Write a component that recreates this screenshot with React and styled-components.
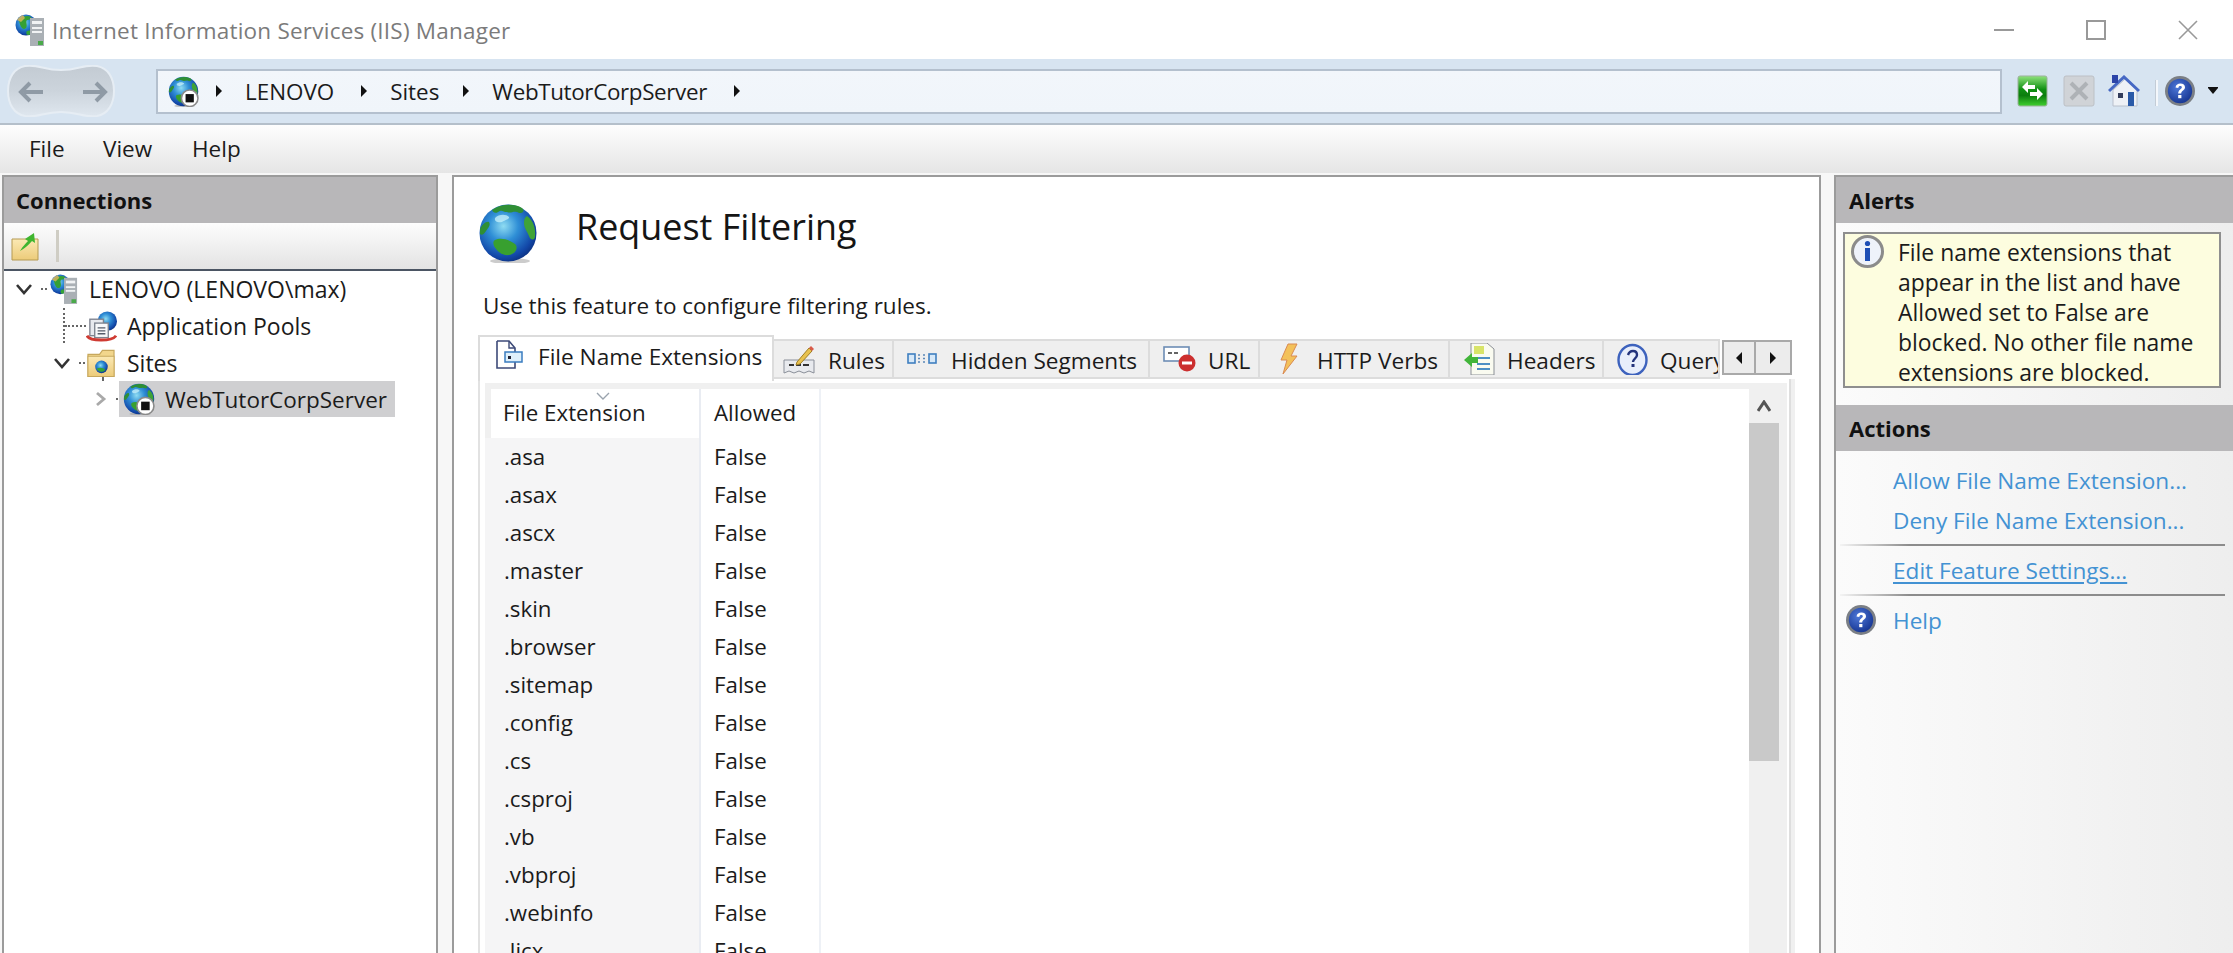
import React from "react";
import styled, { createGlobalStyle } from "styled-components";

const Global = createGlobalStyle`
  html, body { margin: 0; height: 100%; overflow: hidden; background: #f7f7f7; }
  body { font-family: "Open Sans", "Noto Sans", sans-serif; color: #1b1b1b; }
  * { box-sizing: border-box; }
`;

const Win = styled.div`display:flex;flex-direction:column;height:953px;width:2233px;overflow:hidden;`;
const TitleBar = styled.div`height:59px;flex:none;display:flex;align-items:center;background:#fff;padding-left:15px;`;
const TitleText = styled.div`font-size:22.5px;color:#7b7b7b;margin-left:5px;letter-spacing:.22px;margin-top:2px;`;
const WinControls = styled.div`margin-left:auto;display:flex;align-items:center;margin-right:35px;gap:72px;`;
const NavBar = styled.div`height:66px;flex:none;display:flex;align-items:center;background:#d7e4f1;border-bottom:2px solid #b4bfca;padding:0 0 0 7px;`;
const NavPill = styled.svg`width:108px;height:52px;flex:none;margin-right:41px;`;
const Address = styled.div`width:1846px;height:45px;flex:none;display:flex;align-items:center;padding-left:10px;border:2px solid #b4c0ce;background:linear-gradient(180deg,#f2f6fb,#f0f5fa);font-size:22.4px;`;
const Crumb = styled.span`margin:0 ${p=>p.$mr||27}px 0 23px;white-space:nowrap;letter-spacing:${p=>p.$ls||0}px;`;
const NavTools = styled.div`display:flex;align-items:center;margin-left:15px;`;
const NavIcon = styled.svg`width:${p=>p.$w||32}px;height:32px;flex:none;margin-right:${p=>p.$mr||0}px;`;
const NavSep = styled.span`width:3px;height:26px;margin:4px 6px 0 0;background:#f4f7fb;border-left:1px solid #c3ccd6;`;
const DropCaret = styled.span`width:0;height:0;margin-left:12px;border:5px solid transparent;border-top:6px solid #111;border-bottom:0;box-shadow:0 -1px 0 #111;`;
const MenuBar = styled.div`height:48px;flex:none;display:flex;align-items:center;background:linear-gradient(180deg,#fdfdfd,#e5e5e5);font-size:22.5px;padding-left:29px;`;
const MenuItem = styled.span`width:${p=>p.$w}px;margin-top:-2px;`;
const Workspace = styled.div`flex:1;min-height:0;display:flex;padding:2px 0 0 2px;background:#f7f7f7;`;
const Panel = styled.div`border:2px solid #9b9b9b;border-bottom:0;flex:none;display:flex;flex-direction:column;`;
const LeftPanel = styled(Panel)`width:436px;background:#fff;margin-right:14px;border-right-width:2px;`;
const CenterPanel = styled(Panel)`width:1369px;background:#fff;padding:0 24px;margin-right:13px;`;
const RightPanel = styled(Panel)`width:420px;background:linear-gradient(90deg,#fbfbfb,#ededed);border-right:0;border-left-width:2px;`;
const PaneHeader = styled.div`height:46px;flex:none;background:#b8b7b9;display:flex;align-items:center;padding-left:${p=>p.$pad}px;font-size:22px;font-weight:700;color:#111;`;
const ConnToolbar = styled.div`height:48px;flex:none;display:flex;align-items:center;padding-left:7px;background:linear-gradient(180deg,#fdfdfd,#e3e3e3);border-bottom:2px solid #4b5563;`;
const ToolSep = styled.span`width:3px;height:32px;margin-left:17px;background:#cfcdc4;`;
const Tree = styled.div`position:relative;flex:1;font-size:23px;`;
const TreeRow = styled.div`height:36.67px;display:flex;align-items:center;padding-left:${p=>p.$indent}px;white-space:nowrap;`;
const Dots = styled.span`width:${p=>p.$len}px;margin-left:${p=>p.$before||0}px;margin-right:${p=>p.$after||0}px;border-top:2px dotted #666;flex:none;`;
const TreeIcon = styled.svg`width:${p=>p.$w}px;height:32px;flex:none;margin-right:${p=>p.$gap}px;`;
const TreeGlobe = styled.div`width:32px;height:32px;flex:none;margin-right:10px;`;
const Chevron = styled.svg`width:${p=>p.$w}px;height:16px;flex:none;`;
const Selected = styled.div`width:276px;height:36px;display:flex;align-items:center;padding-left:4px;background:#cfcfd1;font-size:22.5px;`;
const VDots = styled.span`position:absolute;left:${p=>p.$x}px;top:${p=>p.$y}px;height:${p=>p.$h}px;border-left:2px dotted #666;`;
const Head = styled.div`display:flex;align-items:flex-start;margin-top:26px;height:60px;flex:none;`;
const HeadTitle = styled.h1`margin:-1px 0 0 38px;font-size:35.9px;line-height:50px;font-weight:400;color:#151515;`;
const Desc = styled.div`margin:28px 0 14px 5px;font-size:22.5px;line-height:30px;flex:none;`;
const TabStrip = styled.div`height:44px;flex:none;display:flex;align-items:flex-end;font-size:22.6px;`;
const Tab = styled.div`
  width:${p=>p.$w}px;flex:none;display:flex;align-items:center;overflow:hidden;white-space:nowrap;
  padding-left:${p=>p.$pad}px;gap:${p=>p.$gap}px;
  height:${p=>p.$active?46:40}px;
  padding-top:${p=>p.$active?0:3}px;
  padding-bottom:${p=>p.$active?6:0}px;
  margin-bottom:${p=>p.$active?-2:0}px;position:relative;
  background:${p=>p.$active?"#fff":"#efefef"};
  border-top:2px solid #dcdcdc;
  border-right:2px solid #dcdcdc;
  border-left:${p=>p.$active?"2px solid #dcdcdc":"0"};
  border-bottom:${p=>p.$active?"0":"2px solid #dcdcdc"};
`;
const TabIcon = styled.svg`width:${p=>p.$w}px;height:32px;flex:none;margin-top:-4px;`;
const TabScroll = styled.div`align-self:flex-start;margin:5px 0 0 2px;display:flex;flex:none;position:relative;`;
const ScrollBtn = styled.div`width:${p=>p.$w}px;height:35px;display:flex;align-items:center;justify-content:center;background:#ececec;border:2px solid #a9a9a9;border-left-width:${p=>p.$first?2:0}px;`;
const TabPage = styled.div`flex:1;min-height:0;width:1313px;display:flex;padding:4px 2px 0 5px;border-left:2px solid #e2e2e2;border-right:2px solid #dedede;box-shadow:4px 0 0 #f0f0f0;`;
const ListView = styled.div`flex:1;min-width:0;display:flex;border-top:6px solid #f0f0f0;overflow:hidden;`;
const ListBody = styled.div`flex:1;min-width:0;font-size:22.3px;`;
const Row = styled.div`display:flex;height:${p=>p.$h}px;`;
const ExtCell = styled.div`width:216px;flex:none;display:flex;align-items:center;padding-left:${p=>p.$head?12:19}px;padding-bottom:2px;background:${p=>p.$head?"#fff":"#f5f5f6"};border-left:${p=>p.$head?"6px solid #f0f0f0":"0"};border-right:2px solid #e9ecf2;position:relative;`;
const AllowCell = styled.div`width:120px;flex:none;display:flex;align-items:center;padding-left:13px;padding-bottom:2px;border-right:2px solid #eef1f6;`;
const SortCaret = styled.svg`position:absolute;left:105px;top:3px;width:14px;height:8px;`;
const Scrollbar = styled.div`width:38px;flex:none;background:#f0f0f0;display:flex;flex-direction:column;`;
const ScrollArrow = styled.div`height:34px;flex:none;display:flex;align-items:center;justify-content:center;padding-right:8px;`;
const ScrollThumb = styled.div`width:30px;height:338px;background:#c9c9c9;flex:none;`;
const AlertBox = styled.div`margin:9px 0 17px 7px;width:378px;height:156px;flex:none;display:flex;align-items:flex-start;padding:4px 0 0 6px;border:2px solid #8f8f8f;background:#fdfddf;font-size:22.9px;line-height:30px;white-space:nowrap;`;
const AlertIcon = styled.svg`width:33px;height:33px;flex:none;margin:-3px 14px 0 0;`;
const ActionLink = styled.div`height:40px;display:flex;align-items:center;padding-left:57px;padding-bottom:2px;font-size:22.6px;color:#4392d3;margin-top:${p=>p.$mt||0}px;`;
const Underlined = styled.span`text-decoration:underline;text-underline-offset:3px;`;
const ActionSep = styled.div`height:2px;width:385px;margin:${p=>p.$m};background:linear-gradient(90deg,#f4f4f4,#8c8c8c 18%,#8c8c8c);`;
const HelpRow = styled.div`height:40px;display:flex;align-items:center;padding-left:9px;gap:16px;font-size:22.6px;color:#4392d3;`;
const Defs = styled.svg`position:absolute;width:0;height:0;`;
const PlainIcon = styled.svg`width:${p=>p.$w}px;height:${p=>p.$h}px;flex:none;`;
const Triangle = styled.span`width:0;height:0;flex:none;margin-left:${p=>p.$ml||0}px;border-top:6px solid transparent;border-bottom:6px solid transparent;border-left:6px solid #111;`;

const GlobeArt = () => (
  <>
    <ellipse cx="32" cy="58" rx="20" ry="3" fill="#8d8d8d" opacity=".45" />
    <circle cx="30" cy="30" r="28.5" fill="url(#gGlobe)" />
    <path d="M14 7C22 1 36 0 44 5c3 3 1 5-3 5-5-3-8 1-12-1-4 0-5-3-9 0-3 2-5 0-6-2Z" fill="#2f8f35" />
    <path d="M49 13c6 4 9 12 8 21-1 4-5 3-6-1-2-5-5-8-5-13 0-4 1-6 3-7Z" fill="#3fa336" />
    <path d="M17 37c6-3 15 0 20 4 4 4 0 10-6 11-7 1-12-4-15-9-1-3-1-5 1-6Z" fill="#38a02f" />
    <path d="M2 26c2-4 6-8 9-7 2 3-1 6-3 9-2 3-4 5-6 3Z" fill="#2f8f35" />
    <path d="M17 15c4-4 11-4 14-1 1 2-4 3-7 5-3 1-8 0-7-4Z" fill="#c8f2fb" opacity=".75" />
  </>
);
const Globe = ({ size, badge }) => (
  <PlainIcon $w={size} $h={size} viewBox="0 0 60 60">
    <GlobeArt />
    {badge && (
      <>
        <circle cx="42" cy="43" r="16" fill="#fff" stroke="#8a8a8a" strokeWidth="3" />
        <rect x="34" y="35" width="16" height="16" fill="#111" />
      </>
    )}
  </PlainIcon>
);
const ServerArt = () => (
  <>
    <circle cx="11" cy="11" r="10.5" fill="url(#gGlobe)" />
    <path d="M4 6c3-4 9-5 12-3 1 2-2 3-4 3-2 2 1 5-1 8-3 3-6-1-7-8Z" fill="#35a035" />
    <path d="M12 17c3-1 6 0 7-2 1 3-2 6-6 6-2 0-2-3-1-4Z" fill="#36a336" />
    <path d="M2 6c2-3 4-4 6-5l2 3-4 4Z" fill="#e2b65a" opacity=".8" />
    <rect x="15" y="4" width="14" height="28" fill="#aab0b5" />
    <rect x="17" y="7" width="10" height="3" fill="#f1f3f4" />
    <rect x="17" y="13" width="10" height="2" fill="#f1f3f4" />
    <rect x="17" y="17" width="10" height="2" fill="#f1f3f4" />
    <rect x="23" y="27" width="5" height="4" fill="#4aa94a" />
  </>
);
const FolderArt = ({ children }) => (
  <>
    <path d="M1 6h12l3-4h12v27H1Z" fill="#f2d68c" stroke="#c7a85d" strokeWidth="1.2" />
    <rect x="1" y="8" width="27" height="21" fill="url(#gFolder)" stroke="#c7a85d" strokeWidth="1" />
    {children}
  </>
);
const HelpArt = () => (
  <>
    <circle cx="16" cy="16" r="15" fill="#7b7f85" />
    <circle cx="16" cy="16" r="12.2" fill="url(#gHelp)" />
    <path d="M11.5 12.5c.5-3 2.5-4 4.8-4 3 0 4.7 1.6 4.7 3.8 0 3.2-3.8 3.3-3.8 6.2h-3c0-4 3.6-4.4 3.6-6.1 0-.9-.6-1.4-1.6-1.4s-1.7.6-1.9 1.9Z" fill="#fff" />
    <rect x="14.2" y="20" width="3.2" height="3.2" fill="#fff" />
  </>
);
const Arrow = ({ x, dir }) => (
  <path d={dir < 0 ? `M${x+27} 27H${x+8} M${x+14} 18l-9 9 9 9` : `M${x} 27H${x+20} M${x+13} 18l9 9-9 9`} fill="none" stroke="#8f9aa5" strokeWidth="4" />
);

const extensions = [".asa",".asax",".ascx",".master",".skin",".browser",".sitemap",".config",".cs",".csproj",".vb",".vbproj",".webinfo",".licx"];

export default function App() {
  return (
    <Win>
      <Global />
      <Defs>
        <defs>
          <radialGradient id="gGlobe" cx=".42" cy=".38" r=".68">
            <stop offset="0" stopColor="#8fdcf2" />
            <stop offset=".38" stopColor="#2f8fd6" />
            <stop offset=".8" stopColor="#1247a8" />
            <stop offset="1" stopColor="#0b2d78" />
          </radialGradient>
          <radialGradient id="gHelp" cx=".4" cy=".35" r=".75">
            <stop offset="0" stopColor="#4e78d8" />
            <stop offset="1" stopColor="#12308c" />
          </radialGradient>
          <linearGradient id="gFolder" x1="0" y1="0" x2="0" y2="1">
            <stop offset="0" stopColor="#fbe9b4" />
            <stop offset="1" stopColor="#eccb79" />
          </linearGradient>
          <linearGradient id="gGreen" x1="0" y1="0" x2="0" y2="1">
            <stop offset="0" stopColor="#8fe37c" />
            <stop offset=".45" stopColor="#0f8f12" />
            <stop offset=".65" stopColor="#0c7d0e" />
            <stop offset="1" stopColor="#3fd02f" />
          </linearGradient>
          <linearGradient id="gPill" x1="0" y1="0" x2="0" y2="1">
            <stop offset="0" stopColor="#c3cbd3" />
            <stop offset=".5" stopColor="#ccd4dc" />
            <stop offset="1" stopColor="#dfe7ef" />
          </linearGradient>
        </defs>
      </Defs>

      <TitleBar>
        <PlainIcon $w={32} $h={32} viewBox="0 0 32 32"><ServerArt /></PlainIcon>
        <TitleText>Internet Information Services (IIS) Manager</TitleText>
        <WinControls>
          <PlainIcon $w={20} $h={20} viewBox="0 0 20 20"><path d="M0 10h20" stroke="#999" strokeWidth="2" /></PlainIcon>
          <PlainIcon $w={20} $h={20} viewBox="0 0 20 20"><rect x="1" y="1" width="18" height="18" fill="none" stroke="#999" strokeWidth="2" /></PlainIcon>
          <PlainIcon $w={20} $h={20} viewBox="0 0 20 20"><path d="M1 1l18 18M19 1L1 19" stroke="#999" strokeWidth="1.6" /></PlainIcon>
        </WinControls>
      </TitleBar>

      <NavBar>
        <NavPill viewBox="0 0 108 52">
          <path d="M18 1c14-2 18 4 36 4s22-6 36-4c11 2 17 12 17 25s-6 23-17 25c-14 2-18-4-36-4s-22 6-36 4C7 49 1 39 1 26S7 3 18 1Z" fill="url(#gPill)" stroke="#e6edf4" strokeWidth="2" />
          <Arrow x={9} dir={-1} />
          <Arrow x={76} dir={1} />
        </NavPill>
        <Address>
          <Globe size={31} badge />
          <Triangle $ml={17} />
          <Crumb>LENOVO</Crumb>
          <Triangle />
          <Crumb $mr={24}>Sites</Crumb>
          <Triangle />
          <Crumb $ls={-0.35}>WebTutorCorpServer</Crumb>
          <Triangle />
        </Address>
        <NavTools>
          <NavIcon $w={31} $mr={15} viewBox="0 0 31 32">
            <rect x="1" y="1" width="29" height="30" rx="2" fill="url(#gGreen)" stroke="#9bb09b" />
            <path d="M5 12l6-6v4h7v4h-7v4Z" fill="#fff" />
            <path d="M26 19l-6 6v-4h-7v-4h7v-4Z" fill="#fff" />
          </NavIcon>
          <NavIcon $mr={13} viewBox="0 0 32 32">
            <rect x="1" y="1" width="30" height="30" rx="2" fill="#d0d3d7" stroke="#bcc0c5" />
            <path d="M8 8l16 16M24 8L8 24" stroke="#aeb2b6" strokeWidth="4" />
          </NavIcon>
          <NavIcon $mr={15} viewBox="0 0 32 32">
            <path d="M5 15v16h24V15L17 4Z" fill="#eef1f6" stroke="#b9c0cc" />
            <path d="M1 16L16 2l15 14" fill="none" stroke="#4668c4" strokeWidth="3" />
            <rect x="4" y="0" width="6" height="8" fill="#2c44a8" />
            <rect x="10" y="18" width="5" height="5" fill="#333d5c" />
            <rect x="20" y="17" width="6" height="14" fill="#2a5aa8" />
          </NavIcon>
          <NavSep />
          <NavIcon viewBox="0 0 32 32"><HelpArt /></NavIcon>
          <DropCaret />
        </NavTools>
      </NavBar>

      <MenuBar>
        <MenuItem $w={74}>File</MenuItem>
        <MenuItem $w={89}>View</MenuItem>
        <MenuItem $w={60}>Help</MenuItem>
      </MenuBar>

      <Workspace>
        <LeftPanel>
          <PaneHeader $pad={12}>Connections</PaneHeader>
          <ConnToolbar>
            <PlainIcon $w={28} $h={30} viewBox="0 0 28 30">
              <path d="M1 8h26v21H1Z" fill="url(#gFolder)" stroke="#b59a52" />
              <path d="M9 20c3-5 6-8 8-10l-3-2 9-6 1 10-3-2c-3 3-6 7-12 10Z" fill="#3fb52f" />
            </PlainIcon>
            <ToolSep />
          </ConnToolbar>
          <Tree>
            <VDots $x={59} $y={37} $h={35} />
            <VDots $x={98} $y={106} $h={4} />
            <TreeRow $indent={11}>
              <Chevron $w={18} viewBox="0 0 18 16"><path d="M2 4l7 8 7-8" fill="none" stroke="#333" strokeWidth="2.6" /></Chevron>
              <Dots $before={8} $len={6} $after={3} />
              <TreeIcon $w={28} $gap={11} viewBox="0 0 30 32"><ServerArt /></TreeIcon>
              <span>LENOVO (LENOVO\max)</span>
            </TreeRow>
            <TreeRow $indent={61}>
              <Dots $len={21} />
              <TreeIcon $w={31} $gap={10} viewBox="0 0 32 32">
                <circle cx="22" cy="11" r="10" fill="url(#gGlobe)" />
                <rect x="4" y="9" width="14" height="17" fill="#e7e9ee" stroke="#7d838f" strokeWidth="1.4" />
                <rect x="9" y="13" width="14" height="15" fill="#f7f8fa" stroke="#7d838f" strokeWidth="1.4" />
                <path d="M12 18h8M12 21h8M12 24h8" stroke="#555c6b" strokeWidth="1.4" />
                <path d="M1 26c3 6 26 6 30 0" fill="none" stroke="#cf3a32" strokeWidth="3" />
              </TreeIcon>
              <span>Application Pools</span>
            </TreeRow>
            <TreeRow $indent={49}>
              <Chevron $w={18} viewBox="0 0 18 16"><path d="M2 4l7 8 7-8" fill="none" stroke="#333" strokeWidth="2.6" /></Chevron>
              <Dots $before={8} $len={6} $after={2} />
              <TreeIcon $w={28} $gap={12} viewBox="0 0 29 30">
                <FolderArt>
                  <circle cx="15" cy="19" r="6.5" fill="url(#gGlobe)" />
                  <path d="M10 21c3-2 7-1 9 1-2 3-7 3-9-1Z" fill="#36a336" />
                </FolderArt>
              </TreeIcon>
              <span>Sites</span>
            </TreeRow>
            <TreeRow $indent={91}>
              <Chevron $w={12} viewBox="0 0 12 16"><path d="M2 2l7 6-7 6" fill="none" stroke="#a9a9a9" strokeWidth="2.8" /></Chevron>
              <Dots $before={9} $len={3} />
              <Selected>
                <TreeGlobe><Globe size={32} badge /></TreeGlobe>
                <span>WebTutorCorpServer</span>
              </Selected>
            </TreeRow>
          </Tree>
        </LeftPanel>

        <CenterPanel>
          <Head>
            <Globe size={60} />
            <HeadTitle>Request Filtering</HeadTitle>
          </Head>
          <Desc>Use this feature to configure filtering rules.</Desc>
          <TabStrip>
            <Tab $active $w={296} $pad={15} $gap={15}>
              <TabIcon $w={28} viewBox="0 0 28 32">
                <path d="M2 3h12l6 7v4M20 24v6H2V3" fill="#fff" stroke="#3d4a78" strokeWidth="1.6" />
                <path d="M14 3v7h6" fill="none" stroke="#3d4a78" strokeWidth="1.4" />
                <rect x="10" y="14" width="17" height="10" fill="#dff0fb" stroke="#3a7cc0" strokeWidth="1.5" />
                <rect x="13" y="18" width="3" height="3" fill="#223" />
              </TabIcon>
              File Name Extensions
            </Tab>
            <Tab $w={120} $pad={9} $gap={13}>
              <TabIcon $w={32} viewBox="0 0 32 32">
                <path d="M1 17h30v13l-5-2-5 2-5-2-5 2-5-2-5 2Z" fill="#e8eaee" stroke="#8a8f99" />
                <path d="M6 22h5M13 22h5M20 22h6" stroke="#333" strokeWidth="2" />
                <path d="M14 19L26 5l3 3-12 13-4 1Z" fill="#e8c24f" stroke="#a17f24" />
                <path d="M26 5l2-2 3 3-2 2Z" fill="#d95b4a" />
              </TabIcon>
              Rules
            </Tab>
            <Tab $w={256} $pad={13} $gap={14}>
              <TabIcon $w={30} viewBox="0 0 30 32">
                <rect x="1" y="11" width="7" height="9" fill="#d6e8f8" stroke="#3f7fc0" strokeWidth="1.6" />
                <rect x="22" y="11" width="7" height="9" fill="#d6e8f8" stroke="#3f7fc0" strokeWidth="1.6" />
                <path d="M11 12h2M16 12h2M11 15.5h2M16 15.5h2M11 19h2M16 19h2" stroke="#5b88b8" strokeWidth="1.6" />
              </TabIcon>
              Hidden Segments
            </Tab>
            <Tab $w={110} $pad={13} $gap={12}>
              <TabIcon $w={33} viewBox="0 0 33 32">
                <rect x="1" y="4" width="25" height="14" fill="#fff" stroke="#6d8db5" strokeWidth="1.6" />
                <path d="M5 10h4M11 10h4" stroke="#333" strokeWidth="1.6" />
                <circle cx="24" cy="20" r="8.5" fill="#cc2f2f" />
                <rect x="19" y="18.5" width="10" height="3" fill="#fff" />
              </TabIcon>
              URL
            </Tab>
            <Tab $w={190} $pad={19} $gap={19}>
              <TabIcon $w={19} viewBox="0 0 19 32">
                <path d="M9 1h9l-6 12h6L4 31l4-14H2Z" fill="#f3c15a" stroke="#d98a52" strokeWidth="1" />
              </TabIcon>
              HTTP Verbs
            </Tab>
            <Tab $w={154} $pad={13} $gap={12}>
              <TabIcon $w={32} viewBox="0 0 32 32">
                <path d="M8 0h16l7 6v26H8Z" fill="#fafbf0" stroke="#8b8f96" />
                <rect x="11" y="3" width="10" height="8" fill="#d8e468" />
                <path d="M14 15h13M14 21h13M14 26h13" stroke="#4d8fc4" strokeWidth="2" />
                <path d="M1 17l8-7v4h6v6H9v4Z" fill="#42b53a" />
              </TabIcon>
              Headers
            </Tab>
            <Tab $w={116} $pad={13} $gap={12}>
              <TabIcon $w={31} viewBox="0 0 31 32">
                <ellipse cx="15.5" cy="17" rx="14" ry="15" fill="#e8eefb" stroke="#3d62bd" strokeWidth="2.4" />
                <path d="M11 12c1-3 3-4 5-4 3 0 4 2 4 4 0 3-4 4-4 7" fill="none" stroke="#23337c" strokeWidth="2.4" />
                <rect x="14.5" y="21" width="3" height="3" fill="#23337c" />
              </TabIcon>
              Query Strings
            </Tab>
            <TabScroll>
              <ScrollBtn $first $w={34}><PlainIcon $w={8} $h={14} viewBox="0 0 8 14"><path d="M7 1v12L1 7Z" fill="#111" /></PlainIcon></ScrollBtn>
              <ScrollBtn $w={36}><PlainIcon $w={8} $h={14} viewBox="0 0 8 14"><path d="M1 1v12l6-6Z" fill="#111" /></PlainIcon></ScrollBtn>
            </TabScroll>
          </TabStrip>
          <TabPage>
            <ListView>
              <ListBody>
                <Row $h={49}>
                  <ExtCell $head>
                    <SortCaret viewBox="0 0 14 8"><path d="M1 1l6 6 6-6" fill="none" stroke="#9aa3ad" strokeWidth="1.4" /></SortCaret>
                    File Extension
                  </ExtCell>
                  <AllowCell>Allowed</AllowCell>
                </Row>
                {extensions.map((e) => (
                  <Row key={e} $h={38}>
                    <ExtCell>{e}</ExtCell>
                    <AllowCell>False</AllowCell>
                  </Row>
                ))}
              </ListBody>
              <Scrollbar>
                <ScrollArrow><PlainIcon $w={14} $h={12} viewBox="0 0 14 12"><path d="M1 11l6-9 6 9" fill="none" stroke="#555" strokeWidth="3" /></PlainIcon></ScrollArrow>
                <ScrollThumb />
              </Scrollbar>
            </ListView>
          </TabPage>
        </CenterPanel>

        <RightPanel>
          <PaneHeader $pad={13}>Alerts</PaneHeader>
          <AlertBox>
            <AlertIcon viewBox="0 0 33 33">
              <circle cx="16.5" cy="16.5" r="15" fill="#eef2fa" stroke="#8b8b8b" strokeWidth="3" />
              <circle cx="16.5" cy="8.5" r="2.6" fill="#1f4fb5" />
              <rect x="14" y="13" width="5" height="13" fill="#1f4fb5" />
            </AlertIcon>
            <span>File name extensions that<br />appear in the list and have<br />Allowed set to False are<br />blocked. No other file name<br />extensions are blocked.</span>
          </AlertBox>
          <PaneHeader $pad={13}>Actions</PaneHeader>
          <ActionLink $mt={10}>Allow File Name Extension...</ActionLink>
          <ActionLink>Deny File Name Extension...</ActionLink>
          <ActionSep $m="3px 0 5px 4px" />
          <ActionLink><Underlined>Edit Feature Settings...</Underlined></ActionLink>
          <ActionSep $m="3px 0 4px 4px" />
          <HelpRow>
            <PlainIcon $w={32} $h={32} viewBox="0 0 32 32"><HelpArt /></PlainIcon>
            Help
          </HelpRow>
        </RightPanel>
      </Workspace>
    </Win>
  );
}
